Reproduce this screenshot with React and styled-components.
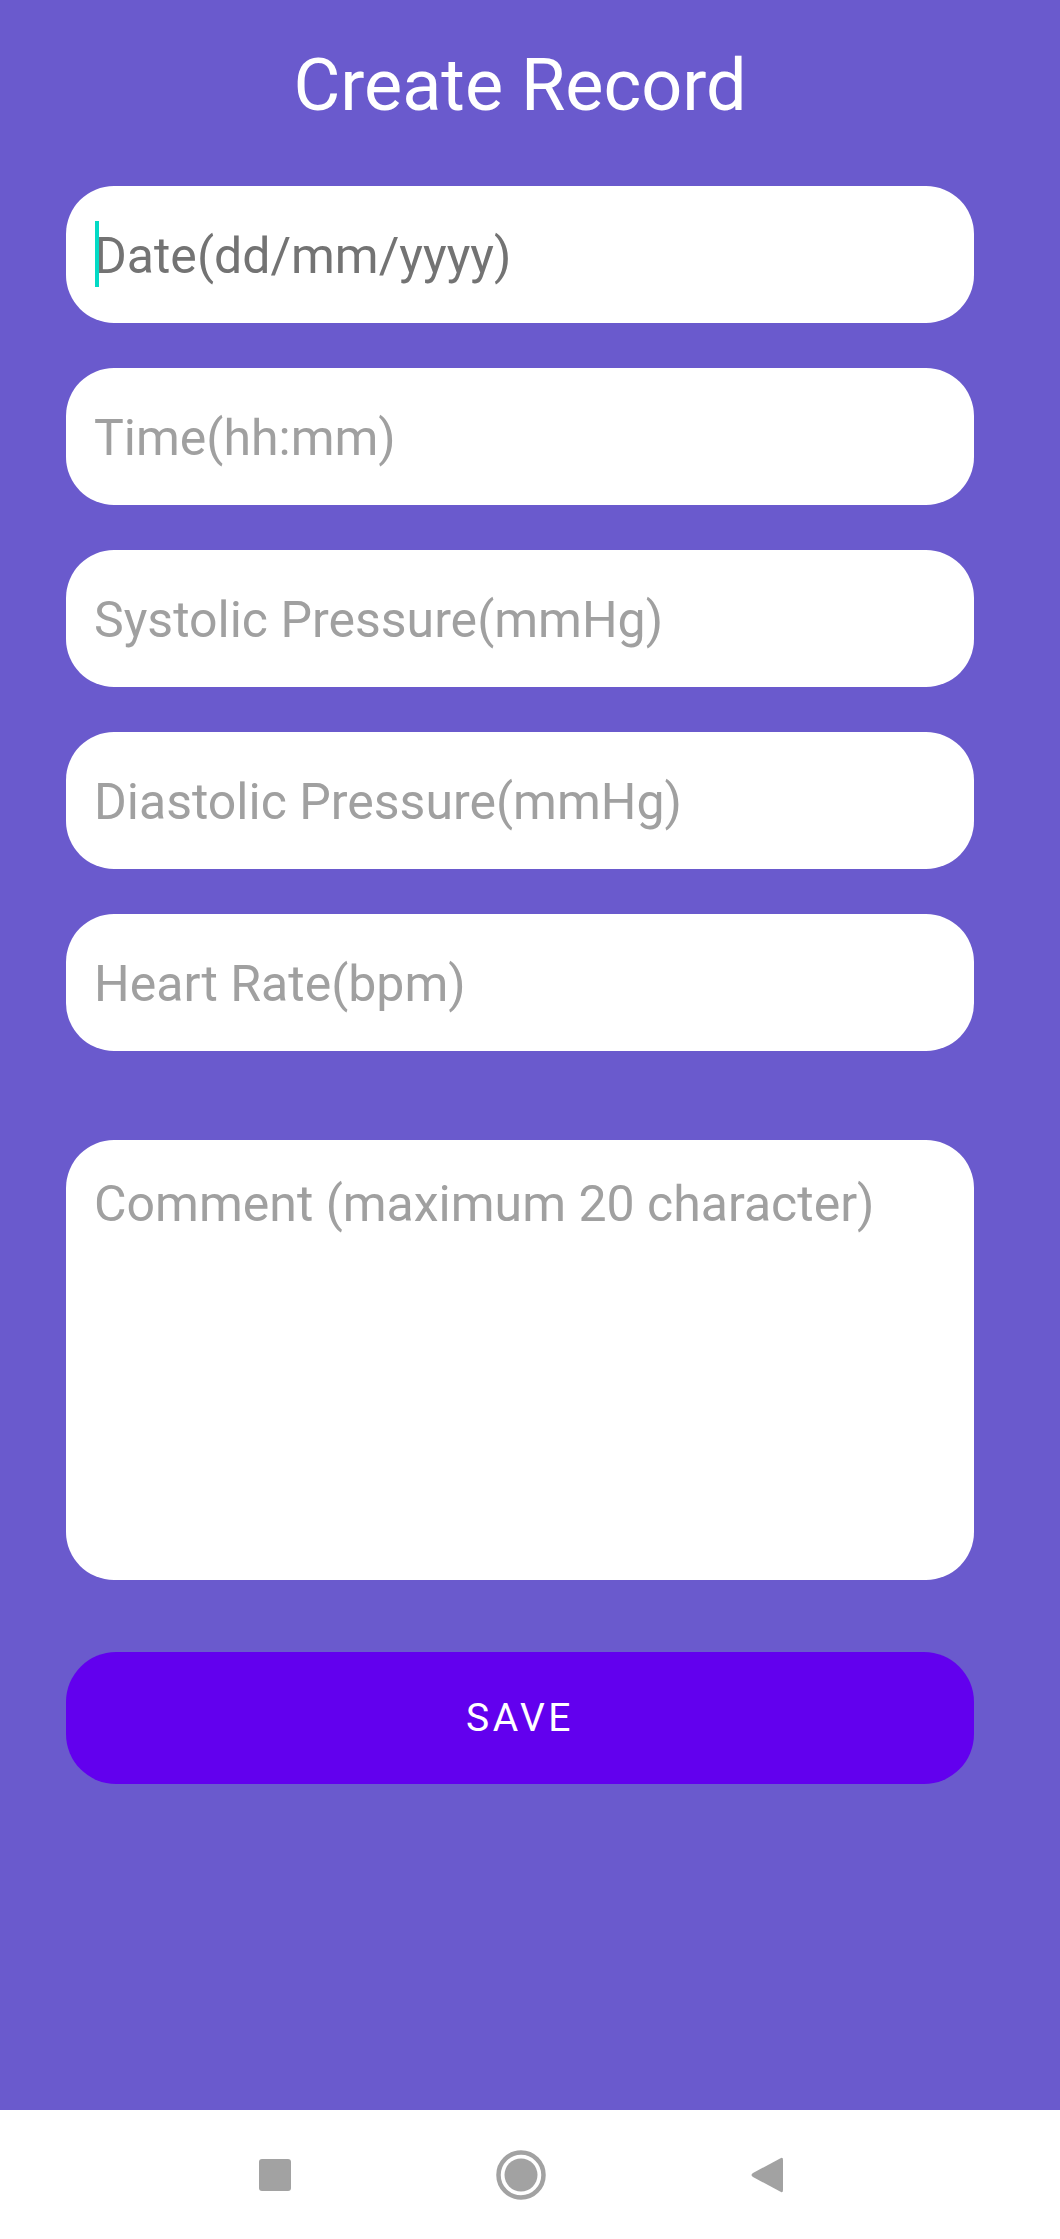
import React from 'react';
import styled, { createGlobalStyle } from 'styled-components';

const GlobalStyle = createGlobalStyle`
  html, body {
    margin: 0;
    padding: 0;
    background: #ffffff;
  }
  * {
    box-sizing: border-box;
  }
`;

const FIELDS = [
  { id: 'date', placeholder: 'Date(dd/mm/yyyy)', focused: true },
  { id: 'time', placeholder: 'Time(hh:mm)' },
  { id: 'systolic', placeholder: 'Systolic Pressure(mmHg)' },
  { id: 'diastolic', placeholder: 'Diastolic Pressure(mmHg)' },
  { id: 'heart', placeholder: 'Heart Rate(bpm)' },
];

const CreateRecordPage = () => {
  return (
    <>
      <GlobalStyle />
      <Screen>
        <Content>
          <Title>Create Record</Title>
          <FieldList>
            {FIELDS.map((field) => (
              <FieldWrapper key={field.id}>
                {field.focused && <Caret />}
                <Input placeholder={field.placeholder} $focused={field.focused} />
              </FieldWrapper>
            ))}
          </FieldList>
          <Comment placeholder="Comment (maximum 20 character)" />
          <SaveButton>Save</SaveButton>
        </Content>
        <NavBar>
          <NavItem>
            <svg width="32" height="32" viewBox="0 0 32 32">
              <rect x="0" y="0" width="32" height="32" rx="3" fill="#a2a2a2" />
            </svg>
          </NavItem>
          <NavItem>
            <svg width="50" height="50" viewBox="0 0 50 50">
              <circle cx="25" cy="25" r="22.5" fill="none" stroke="#a2a2a2" strokeWidth="4.5" />
              <circle cx="25" cy="25" r="16.5" fill="#a2a2a2" />
            </svg>
          </NavItem>
          <NavItem>
            <svg width="34" height="38" viewBox="0 0 34 38">
              <path
                d="M31 2 Q33 1 33 4 L33 34 Q33 37 31 36 L3 21 Q0 19 3 17 Z"
                fill="#a2a2a2"
              />
            </svg>
          </NavItem>
        </NavBar>
      </Screen>
    </>
  );
};

const Screen = styled.div`
  width: 1060px;
  height: 2239px;
  display: flex;
  flex-direction: column;
  font-family: Roboto, 'Noto Sans', sans-serif;
`;

const Content = styled.main`
  height: 2110px;
  background: #6a5acd;
  padding: 50px 86px 0 66px;
  display: flex;
  flex-direction: column;
`;

const Title = styled.h1`
  margin: 0;
  font-size: 72px;
  line-height: 72px;
  font-weight: 400;
  color: #ffffff;
  text-align: center;
`;

const FieldList = styled.div`
  margin-top: 64px;
  display: flex;
  flex-direction: column;
  gap: 45px;
`;

const FieldWrapper = styled.div`
  position: relative;
  height: 137px;
  background: #ffffff;
  border-radius: 48px;
  display: flex;
  align-items: center;
`;

const Caret = styled.span`
  position: absolute;
  left: 29px;
  top: 35px;
  width: 4px;
  height: 66px;
  background: #03dac5;
`;

const Input = styled.input`
  width: 100%;
  height: 100%;
  border: none;
  outline: none;
  background: transparent;
  padding: 3px 28px 0;
  font-family: Roboto, 'Noto Sans', sans-serif;
  font-size: 50px;
  color: #333333;

  &::placeholder {
    color: ${(p) => (p.$focused ? '#737373' : '#a0a0a0')};
    opacity: 1;
  }
`;

const Comment = styled.textarea`
  margin-top: 89px;
  height: 440px;
  border: none;
  outline: none;
  resize: none;
  background: #ffffff;
  border-radius: 48px;
  padding: 35px 28px;
  font-family: Roboto, 'Noto Sans', sans-serif;
  font-size: 50px;
  line-height: normal;
  color: #333333;

  &::placeholder {
    color: #a0a0a0;
    opacity: 1;
  }
`;

const SaveButton = styled.button`
  margin-top: 72px;
  height: 132px;
  border: none;
  border-radius: 50px;
  background: #6200ee;
  color: #ffffff;
  font-family: Roboto, 'Noto Sans', sans-serif;
  font-size: 39px;
  font-weight: 400;
  letter-spacing: 3.5px;
  text-transform: uppercase;
  cursor: pointer;
`;

const NavBar = styled.nav`
  flex: 1;
  background: #ffffff;
  display: flex;
  align-items: center;
  justify-content: center;
  gap: 186px;
  padding-right: 18px;
`;

const NavItem = styled.div`
  width: 60px;
  display: flex;
  justify-content: center;
  align-items: center;
`;

export default CreateRecordPage;
